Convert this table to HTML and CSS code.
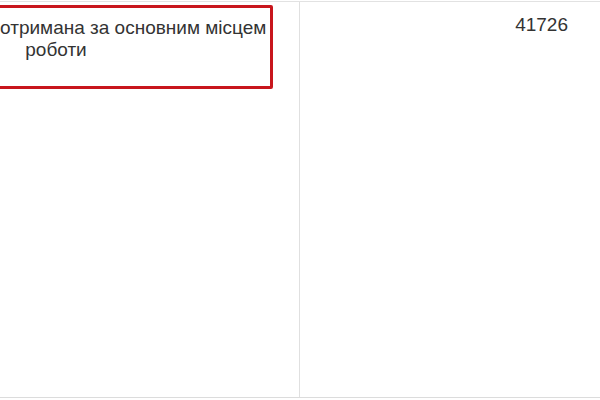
FILE: index.html
```html
<!DOCTYPE html>
<html lang="uk">
<head>
    <meta charset="UTF-8">
    <meta name="viewport" content="width=device-width, initial-scale=1.0">
    <title>Декларація</title>
    <link rel="stylesheet" href="styles.css">
</head>
<body>
    <div class="income-table">
        <div class="cell cell-name">
            <div class="highlight">
                Заробітна плата, отримана за основним місцем<br>роботи
            </div>
        </div>
        <div class="cell cell-sum">41726</div>
    </div>
</body>
</html>
```

FILE: styles.css
```css
body {
    margin: 0;
    overflow: hidden;
    background: #fff;
    font-family: "Liberation Sans", Arial, sans-serif;
    color: #333;
}

.income-table {
    display: grid;
    grid-template-columns: 486px 300px;
    margin-left: -187px;
    margin-top: 1px;
    height: 397px;
    border-top: 1px solid #e2e2e2;
    border-bottom: 1px solid #dcdcdc;
    box-sizing: border-box;
}

.cell {
    font-size: 19px;
    line-height: 22px;
}

.cell-name {
    padding: 3px 26px 0 26px;
}

.highlight {
    border: 3px solid #c8161d;
    border-radius: 2px;
    padding: 9px 0 25px;
    text-align: center;
}

.cell-sum {
    border-left: 1px solid #e0e0e0;
    text-align: right;
    padding: 12px 31px 0 0;
}
```
